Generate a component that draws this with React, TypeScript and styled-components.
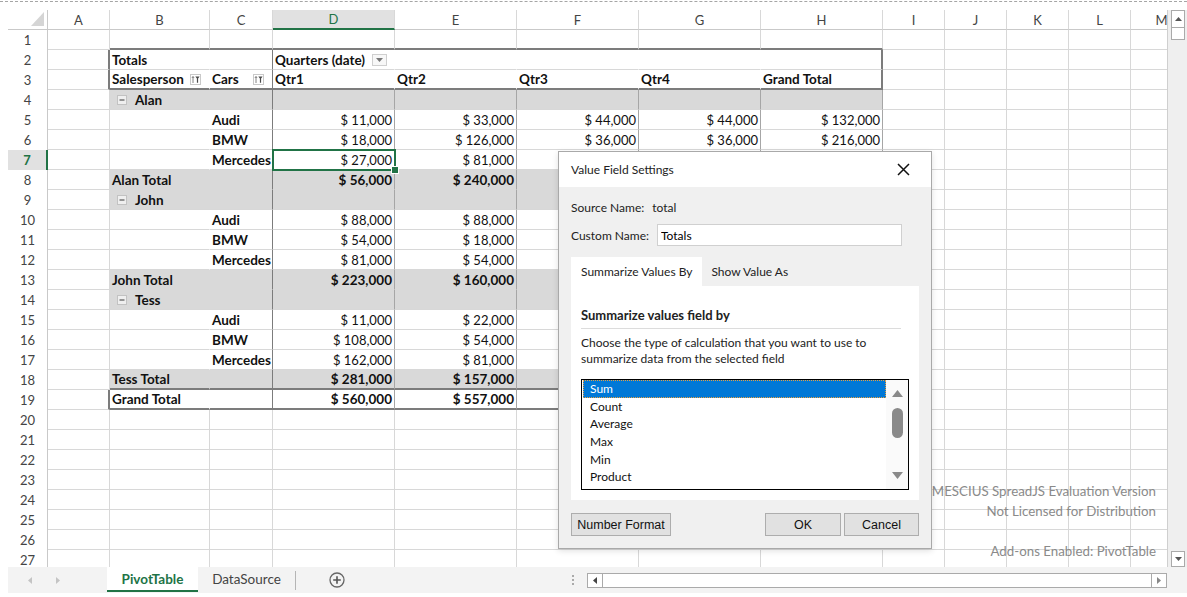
import React from 'react';
import styled, { createGlobalStyle } from 'styled-components';

const GRID = '#d8d8d8';
const FILL = '#d9d9d9';
const GREEN = '#217346';
const CELL_FONT = 'Lato, "Liberation Sans", sans-serif';
const UI_FONT = 'Lato, "Noto Sans", sans-serif';

const COLS = [62, 100, 63, 122, 122, 122, 122, 122, 62, 62, 62, 62, 62];
const LETTERS = 'ABCDEFGHIJKLM'.split('');
const ROW_COUNT = 27;
const ACTIVE_COL = 3;
const ACTIVE_ROW = 7;

type Line = 'grid' | 'none' | 'fill' | 'dark' | 'mid' | 'thick';

const LINES: Record<Line, string> = {
    grid: `1px solid ${GRID}`,
    none: '1px solid transparent',
    fill: `1px solid ${FILL}`,
    dark: '1px solid #7c7c7c',
    mid: '1px solid #a6a6a6',
    thick: '2px solid #7c7c7c',
};

type RowKind = 'head1' | 'head2' | 'group' | 'item' | 'total' | 'grand';

interface PivotRow {
    kind: RowKind;
    label?: string;
    values?: string[];
}

const money = (n: number) => '$ ' + n.toLocaleString('en-US');
const vals = (...n: number[]) => n.map(v => money(v * 1000));

// pivot rows keyed by sheet row number (quarters hidden under the dialog are left out)
const PIVOT: Record<number, PivotRow> = {
    2: { kind: 'head1' },
    3: { kind: 'head2' },
    4: { kind: 'group', label: 'Alan' },
    5: { kind: 'item', label: 'Audi', values: vals(11, 33, 44, 44, 132) },
    6: { kind: 'item', label: 'BMW', values: vals(18, 126, 36, 36, 216) },
    7: { kind: 'item', label: 'Mercedes', values: vals(27, 81) },
    8: { kind: 'total', label: 'Alan Total', values: vals(56, 240) },
    9: { kind: 'group', label: 'John' },
    10: { kind: 'item', label: 'Audi', values: vals(88, 88) },
    11: { kind: 'item', label: 'BMW', values: vals(54, 18) },
    12: { kind: 'item', label: 'Mercedes', values: vals(81, 54) },
    13: { kind: 'total', label: 'John Total', values: vals(223, 160) },
    14: { kind: 'group', label: 'Tess' },
    15: { kind: 'item', label: 'Audi', values: vals(11, 22) },
    16: { kind: 'item', label: 'BMW', values: vals(108, 54) },
    17: { kind: 'item', label: 'Mercedes', values: vals(162, 81) },
    18: { kind: 'total', label: 'Tess Total', values: vals(281, 157) },
    19: { kind: 'grand', label: 'Grand Total', values: vals(560, 557) },
};

const isFilled = (r: number) => {
    const k = PIVOT[r]?.kind;
    return k === 'group' || k === 'total';
};

interface CellDef {
    content?: React.ReactNode;
    bold?: boolean;
    right?: boolean;
    fill?: boolean;
    rightLine: Line;
    bottomLine: Line;
}

function cellAt(r: number, c: number): CellDef {
    const def: CellDef = { rightLine: 'grid', bottomLine: 'grid' };
    const pivotCol = c >= 1 && c <= 7;
    if (r === 1 && pivotCol) def.bottomLine = 'thick';
    if (c === 0 && (r === 2 || r === 3 || r === 19)) def.rightLine = 'thick';
    const row = PIVOT[r];
    if (!row || !pivotCol) return def;

    if (c === 1) def.rightLine = 'none';
    else if (c === 2) def.rightLine = 'dark';
    else if (r <= 3) def.rightLine = c === 7 ? 'thick' : 'none';
    else def.rightLine = 'mid';

    if (r === 3 || r === 18 || r === 19) def.bottomLine = 'thick';
    else if (isFilled(r) && isFilled(r + 1)) def.bottomLine = 'fill';

    def.fill = isFilled(r);
    def.bold = row.kind !== 'item';

    switch (row.kind) {
        case 'head1':
            if (c === 1) def.content = 'Totals';
            if (c === 3) def.content = <HeadLabel>Quarters (date)<DropButton /></HeadLabel>;
            break;
        case 'head2':
            if (c === 1) def.content = <FieldLabel>Salesperson<SortFilterIcon /></FieldLabel>;
            if (c === 2) def.content = <FieldLabel>Cars<SortFilterIcon /></FieldLabel>;
            if (c >= 3 && c <= 6) def.content = `Qtr${c - 2}`;
            if (c === 7) def.content = 'Grand Total';
            break;
        case 'group':
            if (c === 1) def.content = <GroupLabel><CollapseBox />{row.label}</GroupLabel>;
            break;
        case 'item':
            if (c === 2) {
                def.content = row.label;
                def.bold = true;
            }
            break;
        default:
            if (c === 1) def.content = row.label;
    }
    if (row.values && c >= 3) {
        def.content = row.values[c - 3];
        def.right = true;
    }
    return def;
}

export default function App() {
    const cells: React.ReactNode[] = [];
    cells.push(<Corner key="corner"><svg width="13" height="14"><polygon points="13,0 13,14 0,14" fill="#d5d5d5" /></svg></Corner>);
    LETTERS.forEach((l, c) => cells.push(<ColHead key={l} $active={c === ACTIVE_COL}>{l}</ColHead>));
    for (let r = 1; r <= ROW_COUNT; r++) {
        cells.push(<RowHead key={'r' + r} $active={r === ACTIVE_ROW}>{r}</RowHead>);
        for (let c = 0; c < COLS.length; c++) {
            const d = cellAt(r, c);
            cells.push(
                <Cell key={r + '-' + c} $rightLine={d.rightLine} $bottomLine={d.bottomLine}
                      $fill={d.fill} $bold={d.bold} $alignRight={d.right}>
                    {d.content}
                </Cell>
            );
        }
    }

    return (<>
        <GlobalStyle />
        <Page>
            <Sheet>
                <SheetBody>
                    <Viewport>
                        <CellGrid>{cells}</CellGrid>
                        <Selection><FillHandle /></Selection>
                        <Watermark>
                            <div>MESCIUS SpreadJS Evaluation Version</div>
                            <div>Not Licensed for Distribution</div>
                            <div>&nbsp;</div>
                            <div>Add-ons Enabled: PivotTable</div>
                        </Watermark>
                    </Viewport>
                    <VScroll>
                        <ScrollButton $h={18}><Tri dir="up" /></ScrollButton>
                        <ScrollThumb />
                        <ScrollTrack />
                        <ScrollButton $h={16}><Tri dir="down" /></ScrollButton>
                    </VScroll>
                </SheetBody>

                <TabBar>
                    <TabNav>
                        <Tri dir="left" color="#c4c4c4" />
                        <Tri dir="right" color="#c4c4c4" />
                    </TabNav>
                    <SheetTab $active $w={91}>PivotTable</SheetTab>
                    <SheetTab $w={97}>DataSource</SheetTab>
                    <TabDivider />
                    <AddSheet>
                        <svg width="16" height="16" viewBox="0 0 16 16">
                            <circle cx="8" cy="8" r="7" fill="none" stroke="#666" strokeWidth="1.3" />
                            <path d="M8 4.2v7.6M4.2 8h7.6" stroke="#555" strokeWidth="1.6" />
                        </svg>
                    </AddSheet>
                    <TabSpacer />
                    <Grip>
                        <span /><span /><span />
                    </Grip>
                    <HScroll>
                        <HScrollButton $side="left"><Tri dir="left" color="#444" /></HScrollButton>
                        <HScrollTrack />
                        <HScrollButton $side="right"><Tri dir="right" color="#888" /></HScrollButton>
                    </HScroll>
                </TabBar>

                <ValueFieldDialog />
            </Sheet>
        </Page>
    </>);
}

function ValueFieldDialog() {
    const items = ['Sum', 'Count', 'Average', 'Max', 'Min', 'Product'];
    return (<Dialog>
        <DialogTitle>
            Value Field Settings
            <svg width="13" height="13" viewBox="0 0 13 13">
                <path d="M1 1L12 12M12 1L1 12" stroke="#111" strokeWidth="1.5" />
            </svg>
        </DialogTitle>
        <DialogBody>
            <FieldRow>Source Name:<span>total</span></FieldRow>
            <FieldRow>Custom Name:<NameInput defaultValue="Totals" /></FieldRow>

            <DialogTabs>
                <DialogTab $active>Summarize Values By</DialogTab>
                <DialogTab>Show Value As</DialogTab>
            </DialogTabs>

            <TabPanel>
                <PanelTitle>Summarize values field by</PanelTitle>
                <PanelText>
                    <div>Choose the type of calculation that you want to use to</div>
                    <div>summarize data from the selected field</div>
                </PanelText>
                <ListBox>
                    <ListItems>
                        {items.map((it, i) => <ListItem key={it} $selected={i === 0}>{it}</ListItem>)}
                    </ListItems>
                    <ListScroll>
                        <Tri dir="up" color="#8a8a8a" size={11} />
                        <ListThumb />
                        <TabSpacer />
                        <Tri dir="down" color="#8a8a8a" size={11} />
                    </ListScroll>
                </ListBox>
            </TabPanel>

            <ButtonRow>
                <DialogButton $w={100}>Number Format</DialogButton>
                <TabSpacer />
                <DialogButton $w={76}>OK</DialogButton>
                <DialogButton $w={75}>Cancel</DialogButton>
            </ButtonRow>
        </DialogBody>
    </Dialog>);
}

function Tri({ dir, color = '#555', size = 7 }: { dir: 'up' | 'down' | 'left' | 'right'; color?: string; size?: number }) {
    const s = size;
    const h = Math.round(s * 0.6);
    const vertical = dir === 'up' || dir === 'down';
    const w = vertical ? s : h;
    const ht = vertical ? h : s;
    const pts = {
        up: `0,${h} ${s / 2},0 ${s},${h}`,
        down: `0,0 ${s},0 ${s / 2},${h}`,
        left: `${h},0 ${h},${s} 0,${s / 2}`,
        right: `0,0 ${h},${s / 2} 0,${s}`,
    }[dir];
    return <svg width={w} height={ht}><polygon points={pts} fill={color} /></svg>;
}

function SortFilterIcon() {
    return (<svg width="11" height="11" viewBox="0 0 11 11">
        <rect x="0.5" y="0.5" width="10" height="10" fill="#fff" stroke="#c9c9c9" />
        <path d="M3 9V2.6M1.9 4L3 2.5L4.1 4" stroke="#777" fill="none" strokeWidth="0.9" />
        <path d="M5.3 2.4H9.6L8.1 4.6V8.8H6.9V4.6Z" fill="#4a4a4a" />
    </svg>);
}

function DropButton() {
    return (<DropBox>
        <svg width="7" height="4"><polygon points="0,0 7,0 3.5,4" fill="#777" /></svg>
    </DropBox>);
}

function CollapseBox() {
    return (<svg width="10" height="10" viewBox="0 0 10 10">
        <rect x="0.5" y="0.5" width="9" height="9" fill="#efefef" stroke="#c2c2c2" />
        <path d="M2.5 5H7.5" stroke="#555" strokeWidth="1.2" />
    </svg>);
}

const GlobalStyle = createGlobalStyle`
    html, body {
        margin: 0;
        padding: 0;
        background: #fff;
    }
    body {
        font-family: ${CELL_FONT};
        color: #000;
    }
`;

const Page = styled.div`
    width: 1187px;
    box-sizing: border-box;
    margin-top: 1px;
    border-top: 1px dashed #a5a5a5;
    padding: 8px 0 0 8px;
`;

const Sheet = styled.div`
    position: relative;
    width: 1179px;
    display: flex;
    flex-direction: column;
`;

const SheetBody = styled.div`
    display: flex;
    height: 557px;
`;

const Viewport = styled.div`
    position: relative;
    flex: 1;
    overflow: hidden;
`;

const CellGrid = styled.div`
    display: grid;
    grid-template-columns: 40px ${COLS.map(w => w + 'px').join(' ')};
    grid-auto-rows: 20px;
    width: max-content;
`;

const HeadBase = styled.div`
    box-sizing: border-box;
    display: flex;
    align-items: center;
    justify-content: center;
    font-family: ${UI_FONT};
    font-size: 13px;
    color: #444;
`;

const Corner = styled(HeadBase)`
    align-items: flex-end;
    justify-content: flex-end;
    padding: 0 3px 3px 0;
    border-right: 1px solid #c9c9c9;
    border-bottom: 1px solid #c9c9c9;
`;

const ColHead = styled(HeadBase)<{ $active?: boolean }>`
    background: ${p => p.$active ? '#e1e1e1' : '#fff'};
    color: ${p => p.$active ? GREEN : '#444'};
    border-right: 1px solid ${GRID};
    border-bottom: ${p => p.$active ? `2px solid ${GREEN}` : '1px solid #c9c9c9'};
`;

const RowHead = styled(HeadBase)<{ $active?: boolean }>`
    background: ${p => p.$active ? '#e1e1e1' : '#fff'};
    color: ${p => p.$active ? GREEN : '#444'};
    font-weight: ${p => p.$active ? 700 : 400};
    border-right: ${p => p.$active ? `2px solid ${GREEN}` : '1px solid #c9c9c9'};
`;

const Cell = styled.div<{ $rightLine: Line; $bottomLine: Line; $fill?: boolean; $bold?: boolean; $alignRight?: boolean }>`
    box-sizing: border-box;
    display: flex;
    align-items: center;
    justify-content: ${p => p.$alignRight ? 'flex-end' : 'flex-start'};
    padding: 0 2px;
    border-right: ${p => LINES[p.$rightLine]};
    border-bottom: ${p => LINES[p.$bottomLine]};
    background: ${p => p.$fill ? FILL : '#fff'};
    font-size: ${p => p.$bold ? '13.5px' : '13px'};
    font-weight: ${p => p.$bold ? 700 : 400};
    color: #111;
    white-space: nowrap;
    min-width: 0;
`;

const HeadLabel = styled.div`
    display: flex;
    align-items: center;
    gap: 7px;
`;

const FieldLabel = styled.div`
    flex: 1;
    display: flex;
    align-items: center;
    justify-content: space-between;
    padding-right: 6px;

    svg {
        flex: none;
    }
`;

const GroupLabel = styled.div`
    display: flex;
    align-items: center;
    gap: 8px;
    padding-left: 5px;
`;

const DropBox = styled.div`
    box-sizing: border-box;
    width: 15px;
    height: 12px;
    border: 1px solid #cfcfcf;
    background: #f7f7f7;
    display: flex;
    align-items: center;
    justify-content: center;
`;

const Selection = styled.div`
    position: absolute;
    left: 264px;
    top: 139px;
    width: 124px;
    height: 22px;
    box-sizing: border-box;
    border: 2px solid ${GREEN};
    pointer-events: none;
`;

const FillHandle = styled.div`
    position: absolute;
    right: -5px;
    bottom: -5px;
    width: 6px;
    height: 6px;
    background: ${GREEN};
    border: 1px solid #fff;
`;

const Watermark = styled.div`
    position: absolute;
    right: 11px;
    top: 471px;
    text-align: right;
    font-family: ${UI_FONT};
    font-size: 13.3px;
    line-height: 20px;
    color: #8a8a8a;
    pointer-events: none;
`;

const VScroll = styled.div`
    width: 20px;
    box-sizing: border-box;
    background: #efefef;
    border-left: 1px solid #cfcfcf;
    display: flex;
    flex-direction: column;
    padding: 0 2px 0 3px;
`;

const ScrollButton = styled.div<{ $h: number }>`
    box-sizing: border-box;
    height: ${p => p.$h}px;
    background: #fff;
    border: 1px solid #aaa;
    display: flex;
    align-items: center;
    justify-content: center;
`;

const ScrollThumb = styled.div`
    height: 11px;
    background: #fff;
    border: 1px solid #aaa;
    border-top: none;
`;

const ScrollTrack = styled.div`
    flex: 1;
`;

const TabBar = styled.div`
    height: 26px;
    background: #f3f3f3;
    display: flex;
    align-items: stretch;
    font-family: ${UI_FONT};
    font-size: 13.5px;
`;

const TabNav = styled.div`
    width: 99px;
    display: flex;
    align-items: center;
    justify-content: center;
    gap: 24px;
    padding-right: 28px;
    box-sizing: border-box;
`;

const SheetTab = styled.div<{ $active?: boolean; $w: number }>`
    width: ${p => p.$w}px;
    display: flex;
    align-items: center;
    justify-content: center;
    background: ${p => p.$active ? '#fff' : 'transparent'};
    color: ${p => p.$active ? GREEN : '#444'};
    font-weight: ${p => p.$active ? 700 : 400};
    border-bottom: 2px solid ${p => p.$active ? GREEN : 'transparent'};
    margin-bottom: 1px;
`;

const TabDivider = styled.div`
    width: 1px;
    background: #b5b5b5;
    margin: 4px 0 3px 0;
`;

const AddSheet = styled.div`
    width: 82px;
    display: flex;
    align-items: center;
    justify-content: center;
`;

const TabSpacer = styled.div`
    flex: 1;
`;

const Grip = styled.div`
    width: 14px;
    margin-right: 7px;
    display: flex;
    flex-direction: column;
    align-items: center;
    justify-content: center;
    gap: 2px;

    span {
        width: 2px;
        height: 2px;
        background: #aaa;
    }
`;

const HScroll = styled.div`
    width: 580px;
    height: 15px;
    align-self: center;
    box-sizing: border-box;
    border: 1px solid #aaa;
    background: #fff;
    display: flex;
    margin-right: 20px;
`;

const HScrollButton = styled.div<{ $side: 'left' | 'right' }>`
    width: 14px;
    display: flex;
    align-items: center;
    justify-content: center;
    ${p => p.$side === 'left' ? 'border-right: 1px solid #aaa;' : 'border-left: 1px solid #aaa;'}
`;

const HScrollTrack = styled.div`
    flex: 1;
`;

const Dialog = styled.div`
    position: absolute;
    left: 550px;
    top: 141px;
    width: 374px;
    box-sizing: border-box;
    border: 1px solid #a9a9a9;
    background: #f0f0f0;
    box-shadow: 0 2px 6px rgba(0, 0, 0, 0.12);
    font-family: ${UI_FONT};
    font-size: 12px;
    color: #222;
`;

const DialogTitle = styled.div`
    height: 35px;
    background: #fff;
    display: flex;
    align-items: center;
    justify-content: space-between;
    padding: 0 21px 0 12px;
`;

const DialogBody = styled.div`
    padding: 10px 12px 12px 12px;
    display: flex;
    flex-direction: column;
`;

const FieldRow = styled.div`
    display: flex;
    align-items: center;
    min-height: 20px;
    margin-bottom: 7px;
    gap: 8px;
`;

const NameInput = styled.input`
    box-sizing: border-box;
    width: 245px;
    height: 22px;
    border: 1px solid #d0d0d0;
    padding: 0 3px;
    font-family: ${UI_FONT};
    font-size: 12px;
    color: #000;
    outline: none;
`;

const DialogTabs = styled.div`
    display: flex;
    height: 29px;
    margin-top: 4px;
`;

const DialogTab = styled.div<{ $active?: boolean }>`
    display: flex;
    align-items: center;
    padding: 0 ${p => p.$active ? '10px' : '9px'};
    background: ${p => p.$active ? '#fff' : 'transparent'};
    color: #222;
`;

const TabPanel = styled.div`
    background: #fff;
    height: 214px;
    box-sizing: border-box;
    padding: 20px 10px 10px 10px;
    display: flex;
    flex-direction: column;
`;

const PanelTitle = styled.div`
    width: 320px;
    font-size: 13px;
    font-weight: 700;
    color: #222;
    line-height: 18px;
    padding-bottom: 4px;
    border-bottom: 1px solid #dcdcdc;
`;

const PanelText = styled.div`
    margin-top: 6px;
    display: flex;
    flex-direction: column;
    line-height: 16px;
    color: #222;
`;

const ListBox = styled.div`
    margin-top: 12px;
    width: 328px;
    height: 111px;
    box-sizing: border-box;
    border: 1px solid #000;
    display: flex;
`;

const ListItems = styled.div`
    flex: 1;
    padding: 0 0 0 1px;
`;

const ListItem = styled.div<{ $selected?: boolean }>`
    height: 17.6px;
    box-sizing: border-box;
    display: flex;
    align-items: center;
    padding-left: 7px;
    background: ${p => p.$selected ? '#0078d7' : 'transparent'};
    color: ${p => p.$selected ? '#fff' : '#111'};
    outline: ${p => p.$selected ? '1px dotted #e8a040' : 'none'};
    outline-offset: -1px;
`;

const ListScroll = styled.div`
    width: 22px;
    background: #fafafa;
    display: flex;
    flex-direction: column;
    align-items: center;
    padding: 10px 0 10px 0;
    box-sizing: border-box;
`;

const ListThumb = styled.div`
    width: 11px;
    height: 30px;
    margin-top: 11px;
    border-radius: 6px;
    background: #8a8a8a;
`;

const ButtonRow = styled.div`
    display: flex;
    gap: 3px;
    margin-top: 13px;
`;

const DialogButton = styled.button<{ $w: number }>`
    width: ${p => p.$w}px;
    height: 23px;
    box-sizing: border-box;
    background: #e1e1e1;
    border: 1px solid #adadad;
    font-family: "Liberation Sans", Arial, sans-serif;
    font-size: 12.5px;
    color: #111;
    padding: 0;
`;
